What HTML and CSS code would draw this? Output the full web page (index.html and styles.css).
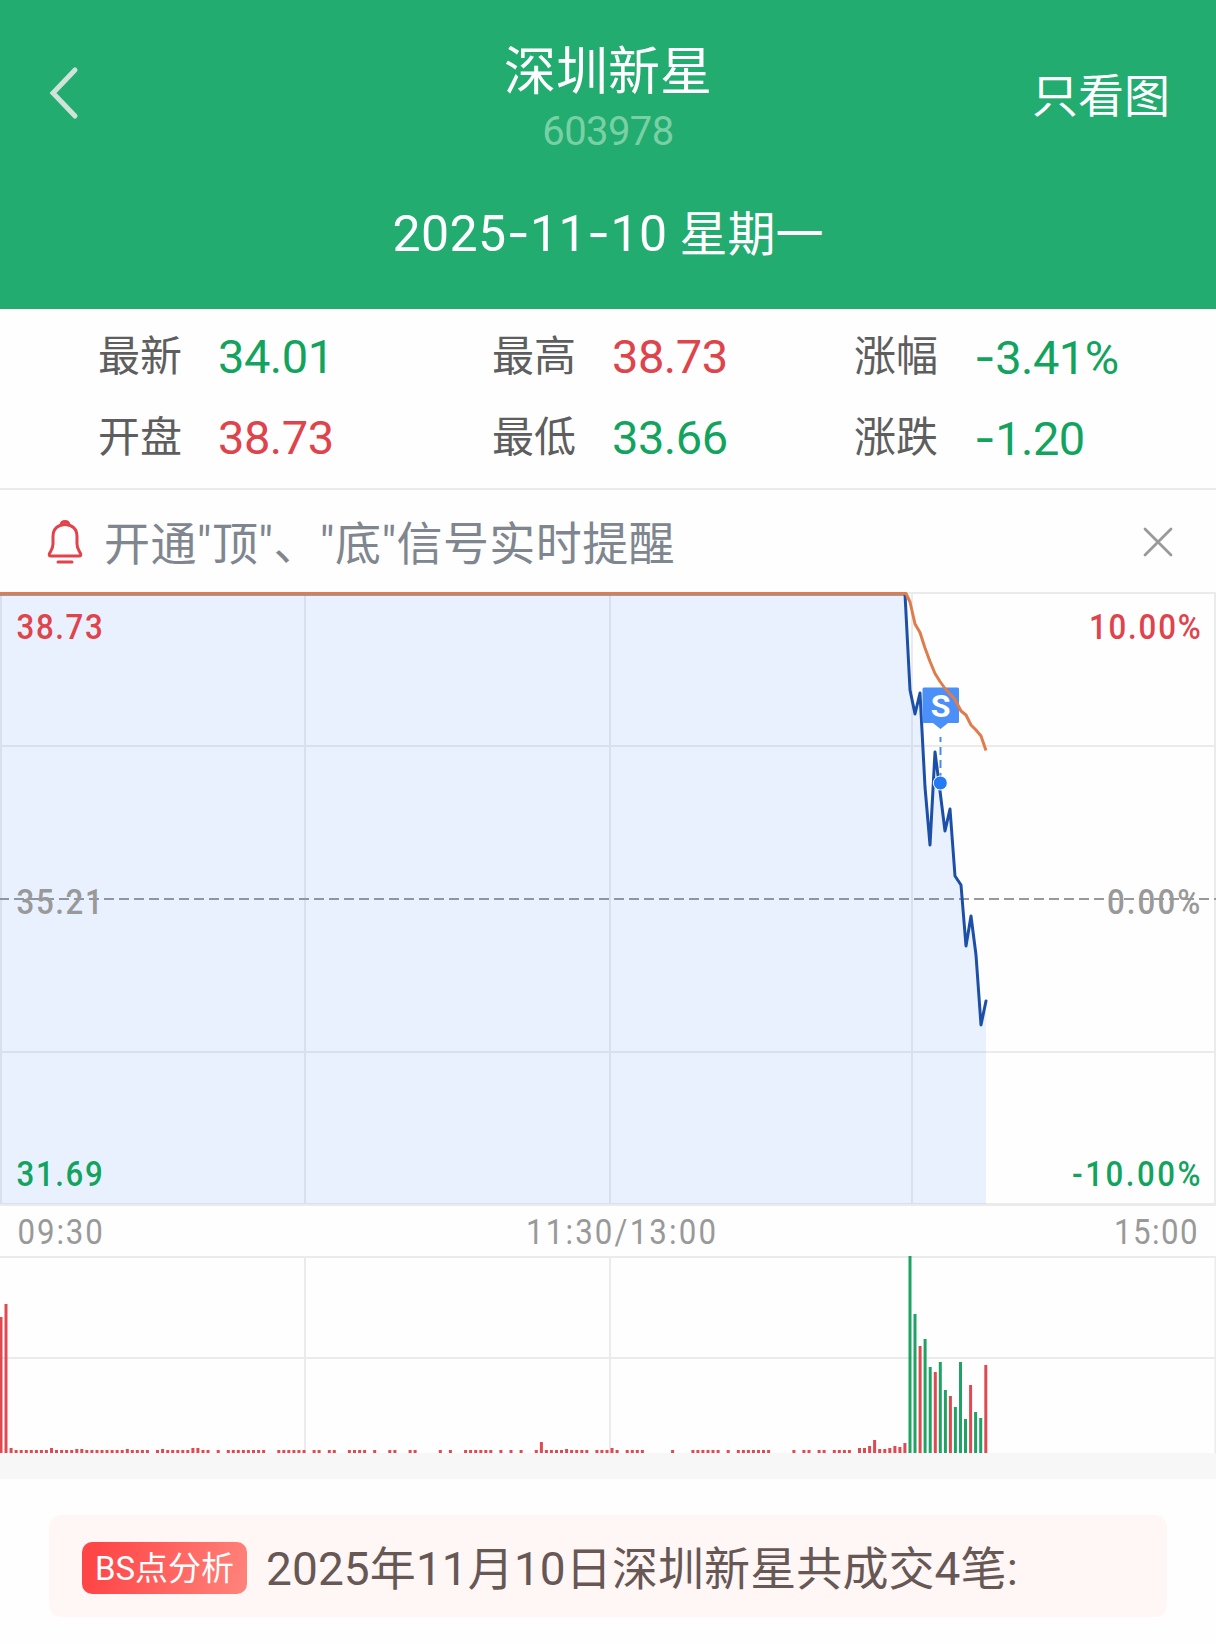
FILE: index.html
```html
<!DOCTYPE html>
<html lang="zh-CN">
<head>
    <meta charset="UTF-8">
    <meta name="viewport" content="width=device-width, initial-scale=1.0">
    <title>深圳新星 603978</title>
    <link rel="stylesheet" href="styles.css">
</head>
<body>
    <header class="header">
        <div class="nav">
            <div class="nav-side">
                <svg class="back-icon" width="34" height="56" viewBox="0 0 34 56">
                    <path d="M29 5 L7 28 L29 51"/>
                </svg>
            </div>
            <div class="nav-title">
                <h1>深圳新星</h1>
                <p class="code">603978</p>
            </div>
            <div class="nav-side nav-right">只看图</div>
        </div>
        <div class="date"><span class="date-num">2025<i>-</i>11<i>-</i>10</span> 星期一</div>
    </header>

    <section class="stats">
        <div class="stat"><span class="label">最新</span><span class="value green">34.01</span></div>
        <div class="stat"><span class="label">最高</span><span class="value red">38.73</span></div>
        <div class="stat"><span class="label">涨幅</span><span class="value green"><i>-</i>3.41%</span></div>
        <div class="stat"><span class="label">开盘</span><span class="value red">38.73</span></div>
        <div class="stat"><span class="label">最低</span><span class="value green">33.66</span></div>
        <div class="stat"><span class="label">涨跌</span><span class="value green"><i>-</i>1.20</span></div>
    </section>

    <section class="notice">
        <svg class="bell-icon" width="38" height="46" viewBox="0 0 38 46">
            <path d="M7 25 V17.5 C7 10 12 5.5 19 5.5 C26 5.5 31 10 31 17.5 V25 C31 29.5 33 31.5 34.5 34.5 Q35.5 37 33 37 H5 Q2.500 37 3.500 34.500 C5 31.500 7 29.500 7 25 Z"/>
            <path d="M15 6 C15.500 1.300 22.500 1.300 23 6"/>
            <path d="M12 43 H26"/>
        </svg>
        <span class="notice-text">开通"顶"、"底"信号实时提醒</span>
        <svg class="close-icon" width="32" height="32" viewBox="0 0 32 32">
            <path d="M3 3 L29 29 M29 3 L3 29"/>
        </svg>
    </section>

    <svg class="chart" width="1216" height="861" viewBox="0 592 1216 861">
        <!-- price grid -->
        <g class="grid">
            <path d="M0 593 H1216 M0 746 H1216 M0 1052 H1216"/>
            <path d="M1 593 V1204 M305 593 V1204 M610 593 V1204 M912 593 V1204 M1215 593 V1204"/>
            <path class="grid-bottom" d="M0 1204.500 H1216"/>
        </g>
        <path class="zero-line" d="M-1 899 H1216"/>
        <path class="area" id="area"/>
        <path class="price" id="price"/>

        <!-- sell marker -->
        <path class="sell-stem" d="M940.500 737 V777"/>
        <circle class="sell-dot" cx="940.300" cy="783" r="7"/>
        <path class="sell-flag" d="M924 687.500 H957.500 Q959 687.500 959 689 V721.500 Q959 723 957.500 723 H948 L940.500 729 L933 723 H924 Q922.500 723 922.500 721.500 V689 Q922.500 687.500 924 687.500 Z"/>
        <text class="sell-text" x="940.500" y="717">S</text>

        <path class="average" id="average"/>

        <!-- labels are condensed, textLength is in the scaled units -->
        <g class="axis">
            <text class="red" transform="translate(16.5 639) scale(0.88 1)" textLength="98">38.73</text>
            <text class="gray" transform="translate(16.5 914) scale(0.88 1)" textLength="98">35.21</text>
            <text class="green" transform="translate(16.5 1186) scale(0.88 1)" textLength="98">31.69</text>
            <text class="red" transform="translate(1089 639) scale(0.88 1)" textLength="127">10.00%</text>
            <text class="gray" transform="translate(1107 914) scale(0.88 1)" textLength="106">0.00%</text>
            <text class="green" transform="translate(1072 1186) scale(0.88 1)" textLength="146">-10.00%</text>
        </g>
        <g class="axis time">
            <text transform="translate(17.5 1244) scale(0.88 1)" textLength="97">09:30</text>
            <text transform="translate(526 1244) scale(0.88 1)" textLength="216">11:30/13:00</text>
            <text transform="translate(1114 1244) scale(0.88 1)" textLength="95">15:00</text>
        </g>

        <!-- volume -->
        <g class="grid">
            <path d="M0 1257 H1216 M0 1358 H1216"/>
            <path d="M305 1257 V1453 M610 1257 V1453 M1215.500 1257 V1453"/>
        </g>
        <g id="volume"></g>
    </svg>

    <div class="divider"></div>

    <section class="analysis">
        <span class="badge">BS点分析</span>
        <span class="analysis-text">2025年11月10日深圳新星共成交4笔:</span>
    </section>

    <script>
        const pricePoints = [
            [0, 594], [905, 594], [910, 690], [915, 714], [920, 693], [925, 787], [930, 845],
            [935, 752], [940, 791], [945, 831], [950, 809], [955, 876], [961, 885], [966, 946],
            [971, 916], [976, 955], [981, 1025], [986, 1001]
        ];
        const averagePoints = [
            [0, 593.5], [906, 593.5], [910, 602], [915, 624], [920, 632.5], [925, 648], [930, 661.5],
            [935, 673.5], [940, 681.5], [945, 688.5], [950, 694], [955, 699.5], [961, 711], [966, 715],
            [971, 725], [976, 730], [981, 736], [986, 750.5]
        ];

        const toPath = points => 'M' + points.map(p => p.join(' ')).join(' L');
        document.getElementById('price').setAttribute('d', toPath(pricePoints));
        document.getElementById('area').setAttribute('d', toPath(pricePoints) + ' V1204 H0 Z');
        document.getElementById('average').setAttribute('d', toPath(averagePoints));

        // Minutes with only a few trades, as [first, last]
        const quietRanges = [
            [2, 29], [31, 41], [43, 43], [45, 52], [55, 60], [62, 63], [65, 66], [69, 72], [74, 74],
            [77, 78], [81, 82], [87, 87], [89, 89], [92, 97], [99, 99], [101, 101], [103, 103],
            [106, 116], [118, 122], [124, 127], [133, 133], [137, 142], [144, 144], [146, 152],
            [157, 157], [159, 160], [162, 163], [165, 168]
        ];
        const volumes = {
            0: 136, 1: 149, 2: 5, 10: 5, 15: 4, 16: 4, 25: 4, 32: 4, 38: 5, 39: 5, 107: 11, 112: 4, 121: 5,
            170: 5, 171: 5, 172: 7, 173: 13, 174: 4, 175: 4, 176: 5, 177: 7, 178: 6, 179: 10,
            180: 197, 181: 139, 182: 107, 183: 114, 184: 86, 185: 81, 186: 91, 187: 63,
            188: 57, 189: 46, 190: 91, 191: 34, 192: 68, 193: 41, 194: 35, 195: 88
        };
        const falling = [180, 181, 183, 184, 186, 187, 189, 190, 191, 193, 194];

        quietRanges.forEach(([from, to]) => {
            for (let i = from; i <= to; i++) {
                volumes[i] = volumes[i] || 3;
            }
        });

        document.getElementById('volume').innerHTML = Object.keys(volumes).map(key => {
            const i = Number(key);
            const x = (i * 5.05 - 0.5).toFixed(1);
            const cls = falling.includes(i) ? 'bar-down' : 'bar-up';
            return `<rect class="${cls}" x="${x}" y="${1453 - volumes[i]}" width="3" height="${volumes[i]}"/>`;
        }).join('');
    </script>
</body>
</html>
```
FILE: styles.css
```css
* {
    margin: 0;
    padding: 0;
    box-sizing: border-box;
}

body {
    width: 1216px;
    background-color: #fefefe;
    font-family: Roboto, "Noto Sans CJK SC", sans-serif;
    font-weight: 400;
    overflow: hidden;
}

i {
    font-family: Inter, sans-serif;
    font-style: normal;
}

svg {
    display: block;
    fill: none;
}

.red {
    color: #df434b;
    fill: #df434b;
}

.green {
    color: #12a35f;
    fill: #12a35f;
}

.gray {
    fill: #999;
}

/* header */
.header {
    height: 309px;
    padding-top: 34px;
    background-color: #22ac6f;
    color: #fff;
}

.nav {
    display: grid;
    grid-template-columns: 300px 1fr 300px;
    height: 120px;
}

.nav-side {
    display: flex;
    align-items: center;
    padding: 0 0 4px 46px;
}

.nav-right {
    justify-content: flex-end;
    padding: 0 46px 7px 0;
    font-size: 46px;
}

.back-icon path {
    stroke: #cfe3d8;
    stroke-width: 5;
    stroke-linecap: round;
}

.nav-title {
    padding-top: 4px;
    text-align: center;
}

h1 {
    font-size: 52px;
    font-weight: 400;
    line-height: 70px;
}

.code {
    font-size: 40px;
    line-height: 48px;
    letter-spacing: -0.6px;
    color: #79d0a5;
}

.date {
    margin-top: 44px;
    text-align: center;
    font-size: 48px;
    line-height: 70px;
}

.date-num {
    font-size: 50px;
    letter-spacing: 0.4px;
}

/* stats */
.stats {
    display: grid;
    grid-template-columns: 394px 362px 1fr;
    grid-auto-rows: 81px;
    height: 181px;
    padding: 5px 0 0 98px;
    border-bottom: 2px solid #ebebeb;
}

.stat {
    display: flex;
    align-items: center;
    height: 81px;
    line-height: 81px;
}

.label {
    width: 84px;
    margin-right: 36px;
    padding-top: 4px;
    font-size: 42px;
    color: #5e5e5e;
}

.value {
    padding-top: 4px;
    font-size: 47px;
    letter-spacing: -0.5px;
}

/* notice */
.notice {
    display: flex;
    align-items: center;
    height: 102px;
    padding: 2px 42px 0 46px;
}

.bell-icon path {
    stroke: #e2434b;
    stroke-width: 3;
    stroke-linecap: round;
    stroke-linejoin: round;
}

.notice-text {
    flex: 1;
    margin-left: 20px;
    padding-top: 4px;
    font-size: 46px;
    line-height: 60px;
    letter-spacing: 0.4px;
    color: #80868f;
}

.close-icon path {
    stroke: #999;
    stroke-width: 2.8;
    stroke-linecap: round;
}

/* chart */
.grid path {
    stroke: #ebebeb;
    stroke-width: 2;
}

.grid .grid-bottom {
    stroke-width: 3;
}

.zero-line {
    stroke: #999;
    stroke-width: 2;
    stroke-dasharray: 10 5;
}

.area {
    fill: rgba(60, 130, 255, 0.1);
}

.price {
    stroke: #1c50a8;
    stroke-width: 3;
    stroke-linejoin: round;
    stroke-linecap: round;
}

.average {
    stroke: #e07c4b;
    stroke-width: 3;
    stroke-linejoin: round;
}

.sell-stem {
    stroke: #4a8be8;
    stroke-width: 2;
    stroke-dasharray: 8 5;
    stroke-dashoffset: 3;
}

.sell-dot {
    fill: #2479f5;
    stroke: #fff;
    stroke-width: 1;
}

.sell-flag {
    fill: #4b8ff8;
}

.sell-text {
    fill: #fff;
    font-size: 32px;
    font-weight: 700;
    text-anchor: middle;
}

.axis text {
    font-size: 35.5px;
    font-weight: 500;
}

.time text {
    font-weight: 400;
    fill: #999;
}

.bar-up {
    fill: #df4a50;
}

.bar-down {
    fill: #1ea365;
}

.divider {
    height: 26px;
    background-color: #f7f7f7;
}

/* analysis */
.analysis {
    display: flex;
    align-items: center;
    height: 102px;
    margin: 36px 49px 27px;
    padding: 4px 33px 0;
    border-radius: 12px;
    background-color: #fff7f5;
}

.badge {
    width: 165px;
    height: 52px;
    border-radius: 10px;
    background: linear-gradient(105deg, #ff4647 10%, #ff8179 95%);
    color: #fff;
    font-size: 33px;
    line-height: 54px;
    text-align: center;
}

.analysis-text {
    margin-left: 19px;
    padding-top: 2px;
    font-size: 46px;
    line-height: 60px;
    letter-spacing: 0.1px;
    color: #675755;
}
```
